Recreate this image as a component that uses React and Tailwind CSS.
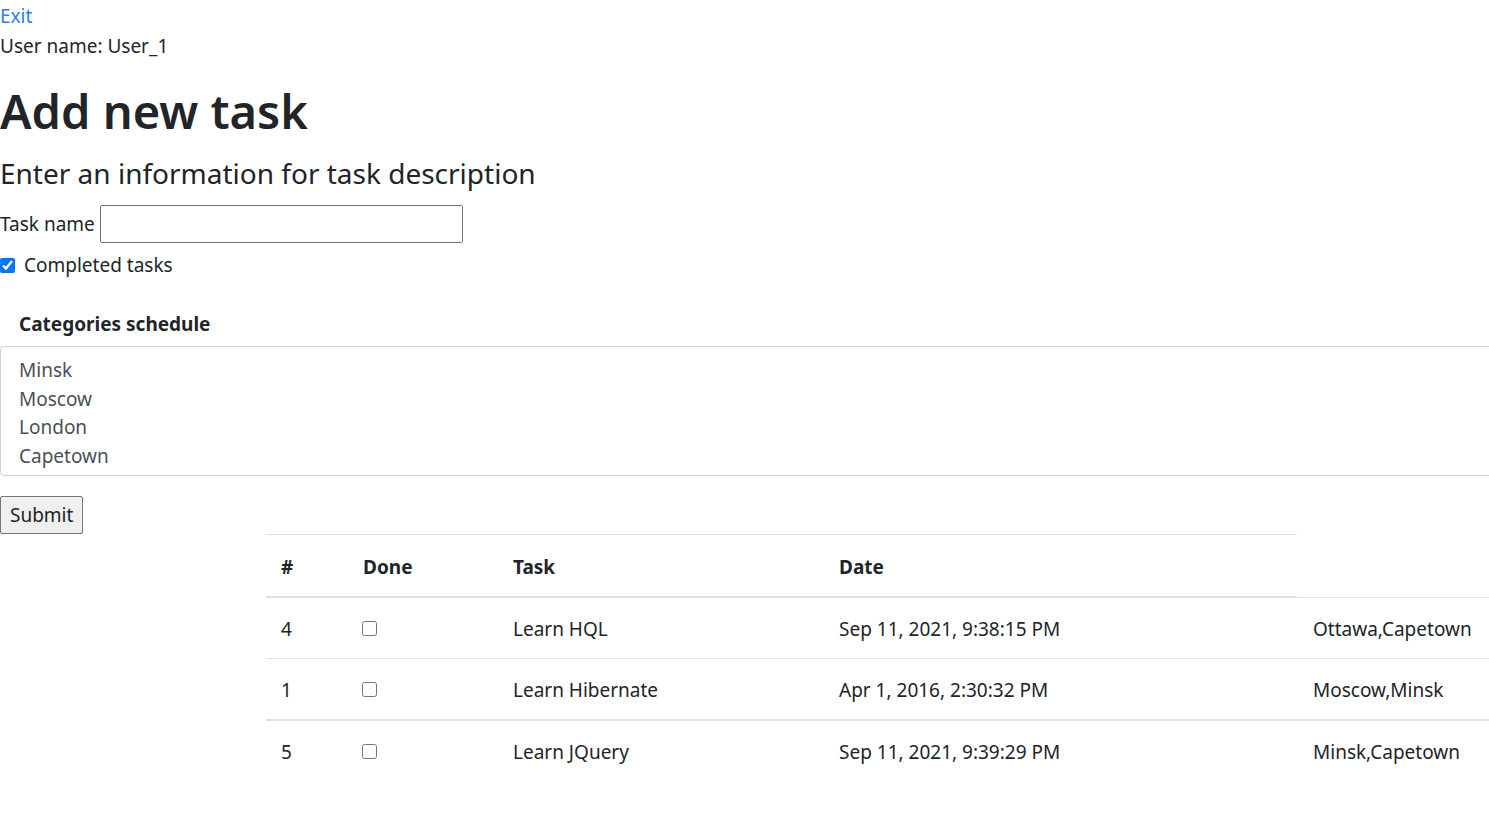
import React from 'react';

const tasks = [
  { id: 4, name: 'Learn HQL', date: 'Sep 11, 2021, 9:38:15 PM', cities: 'Ottawa,Capetown' },
  { id: 1, name: 'Learn Hibernate', date: 'Apr 1, 2016, 2:30:32 PM', cities: 'Moscow,Minsk' },
  { id: 5, name: 'Learn JQuery', date: 'Sep 11, 2021, 9:39:29 PM', cities: 'Minsk,Capetown' },
];

const categories = ['Minsk', 'Moscow', 'London', 'Capetown'];

function Row({ task }) {
  return (
    <tr>
      <td className="border-t border-[#dee2e6] px-[15px] pt-[16px] pb-[14px] align-top">{task.id}</td>
      <td className="border-t border-[#dee2e6] px-[14px] pt-[16px] pb-[14px] align-top">
        <input type="checkbox" className="mt-[6px] h-[15px] w-[15px]" />
      </td>
      <td className="border-t border-[#dee2e6] px-[15px] pt-[16px] pb-[14px] align-top">{task.name}</td>
      <td className="border-t border-[#dee2e6] px-[15px] pt-[16px] pb-[14px] align-top">{task.date}</td>
      <td className="border-t border-[#dee2e6] px-[16px] pt-[16px] pb-[14px] align-top">{task.cities}</td>
    </tr>
  );
}

export default function App() {
  return (
    <div className="w-full overflow-x-hidden bg-white text-[#212529] text-[19px] leading-[30px] font-['Noto_Sans','Open_Sans',sans-serif]">
      <a href="#" className="block pt-[1px] text-[#2e7ce8]">Exit</a>
      <div>User name: User_1</div>

      <h1 className="mt-[21px] mb-[16px] text-[47px] leading-[58px] font-semibold">Add new task</h1>
      <h3 className="mb-[14px] text-[28px] leading-[35px]">Enter an information for task description</h3>

      <div className="flex items-center gap-[5px]">
        <label>Task name</label>
        <input type="text" className="h-[38px] w-[363px] rounded-[2px] border border-[#767676] px-2" />
      </div>
      <div className="mt-[7px] flex items-center gap-[9px]">
        <input type="checkbox" defaultChecked className="h-[15px] w-[15px] accent-[#0075ff]" />
        <label>Completed tasks</label>
      </div>

      <div className="mt-[29px] pl-[19px] font-bold">Categories schedule</div>
      <div className="mt-[7px] w-[1510px] rounded-[4px] border border-[#ced4da] px-[18px] pt-[9px] pb-[5px] text-[#495057] leading-[28.5px]">
        {categories.map((c) => (
          <div key={c}>{c}</div>
        ))}
      </div>

      <button className="mt-[20px] h-[38px] rounded-[2px] border border-[#767676] bg-[#efefef] px-[9px]">Submit</button>

      <table className="ml-[266px] w-[1223px] table-fixed border-collapse text-left">
        <colgroup>
          <col className="w-[82px]" />
          <col className="w-[150px]" />
          <col className="w-[326px]" />
          <col className="w-[473px]" />
          <col className="w-[192px]" />
        </colgroup>
        <thead>
          <tr>
            <th className="border-t border-b-2 border-[#dee2e6] px-[15px] pt-[17px] pb-[14px] font-bold">#</th>
            <th className="border-t border-b-2 border-[#dee2e6] px-[15px] pt-[17px] pb-[14px] font-bold">Done</th>
            <th className="border-t border-b-2 border-[#dee2e6] px-[15px] pt-[17px] pb-[14px] font-bold">Task</th>
            <th className="border-t border-b-2 border-[#dee2e6] px-[15px] pt-[17px] pb-[14px] font-bold">Date</th>
          </tr>
        </thead>
        <tbody>
          <Row task={tasks[0]} />
          <Row task={tasks[1]} />
        </tbody>
        <tbody className="border-t-2 border-[#dee2e6]">
          <Row task={tasks[2]} />
        </tbody>
      </table>
    </div>
  );
}
